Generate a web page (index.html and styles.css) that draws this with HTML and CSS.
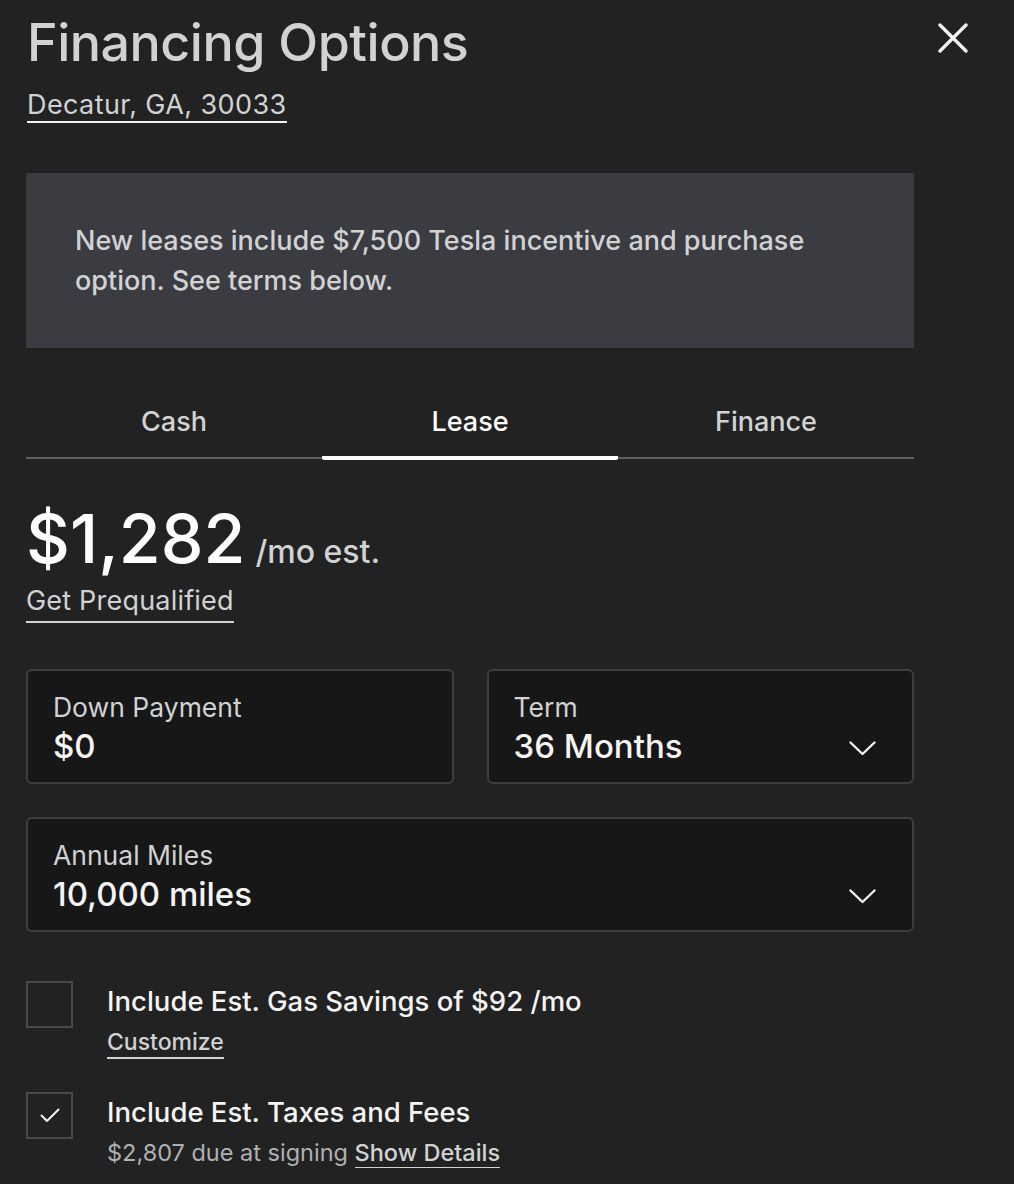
FILE: index.html
```html
<!DOCTYPE html>
<html lang="en">

<head>
    <meta charset="utf-8">
    <meta name="viewport" content="width=device-width, initial-scale=1.0">
    <title>Financing Options</title>
    <link rel="stylesheet" href="styles.css">
</head>

<body>

    <header class="top">
        <div>
            <h1>Financing Options</h1>
            <a class="zip" href="#">Decatur, GA, 30033</a>
        </div>
        <button class="luk" aria-label="Close">
            <svg width="30" height="30" viewBox="0 0 30 30">
                <path d="M2 2 L28 28 M28 2 L2 28" stroke="#f2f2f2" stroke-width="3.4" stroke-linecap="round" fill="none" />
            </svg>
        </button>
    </header>

    <main class="indhold">

        <div class="banner">
            New leases include $7,500 Tesla incentive and purchase option. See terms below.
        </div>

        <nav class="faner">
            <button class="fane">Cash</button>
            <button class="fane valgt">Lease</button>
            <button class="fane">Finance</button>
        </nav>

        <div class="pris">
            <span class="beloeb">$1,282</span>
            <span class="enhed">/mo est.</span>
        </div>
        <a class="link prequal" href="#">Get Prequalified</a>

        <section class="felter">
            <div class="felt">
                <span class="label">Down Payment</span>
                <span class="vaerdi">$0</span>
            </div>
            <div class="felt">
                <span class="label">Term</span>
                <span class="vaerdi">36 Months</span>
                <svg class="pil" width="27" height="15" viewBox="0 0 27 15">
                    <path d="M1.5 1.5 L13.5 13 L25.5 1.5" stroke="#f2f2f2" stroke-width="2.4" fill="none" stroke-linecap="round" stroke-linejoin="round" />
                </svg>
            </div>
            <div class="felt bred">
                <span class="label">Annual Miles</span>
                <span class="vaerdi">10,000 miles</span>
                <svg class="pil" width="27" height="15" viewBox="0 0 27 15">
                    <path d="M1.5 1.5 L13.5 13 L25.5 1.5" stroke="#f2f2f2" stroke-width="2.4" fill="none" stroke-linecap="round" stroke-linejoin="round" />
                </svg>
            </div>
        </section>

        <div class="valg">
            <span class="boks"></span>
            <div>
                <p class="valg-titel">Include Est. Gas Savings of $92 /mo</p>
                <a class="link lille" href="#">Customize</a>
            </div>
        </div>

        <div class="valg">
            <span class="boks">
                <svg width="20" height="15" viewBox="0 0 20 15">
                    <path d="M1.5 7.5 L7 13 L18.5 1.5" stroke="#f2f2f2" stroke-width="2" fill="none" stroke-linecap="round" stroke-linejoin="round" />
                </svg>
            </span>
            <div>
                <p class="valg-titel">Include Est. Taxes and Fees</p>
                <p class="note">$2,807 due at signing <a class="link" href="#">Show Details</a></p>
            </div>
        </div>

    </main>

</body>

</html>
```

FILE: styles.css
```css
body {
    margin: 0;
    background-color: #222222;
    color: #d1d2d4;
    font-family: Inter, "Noto Sans", sans-serif;
}

a {
    color: #d1d2d4;
    text-decoration: none;
}

p {
    margin: 0;
}

/* ---------- top ---------- */

.top {
    display: flex;
    justify-content: space-between;
    align-items: flex-start;
    padding: 11px 46px 0 27px;
}

h1 {
    margin: 0;
    font-size: 52px;
    font-weight: 500;
    letter-spacing: -0.5px;
    line-height: 64px;
}

.zip {
    display: inline-block;
    margin-top: 15px;
    font-size: 27px;
    letter-spacing: 0.4px;
    border-bottom: 2px solid #f2f2f2;
    line-height: 30px;
    padding-bottom: 1px;
}

.luk {
    background: none;
    border: none;
    padding: 0;
    margin-top: 12px;
    cursor: pointer;
}

/* ---------- indhold ---------- */

.indhold {
    width: 888px;
    padding-left: 26px;
}

.banner {
    margin-top: 50px;
    background-color: #3b3c41;
    padding: 48px 49px 47px 49px;
    font-size: 27px;
    font-weight: 500;
    line-height: 40px;
    color: #d1d2d4;
}

.faner {
    display: grid;
    grid-template-columns: 1fr 1fr 1fr;
    margin-top: 57px;
    border-bottom: 2px solid #5e5e5e;
}

.fane {
    background: none;
    border: none;
    font-family: inherit;
    font-size: 27px;
    font-weight: 500;
    line-height: 34px;
    color: #d1d2d4;
    padding: 0 0 17px 0;
    margin-bottom: -3px;
    border-bottom: 4px solid transparent;
}

.fane.valgt {
    color: #ffffff;
    border-bottom: 4px solid #ffffff;
    border-radius: 2px;
}

/* ---------- pris ---------- */

.pris {
    margin-top: 44px;
    display: flex;
    align-items: baseline;
    gap: 10px;
}

.beloeb {
    font-size: 68px;
    font-weight: 500;
    color: #ffffff;
    line-height: 70px;
}

.enhed {
    font-size: 32px;
    font-weight: 500;
    color: #d1d2d4;
}

.link {
    border-bottom: 2px solid #d1d2d4;
}

.prequal {
    display: inline-block;
    margin-top: 13px;
    font-size: 27px;
    letter-spacing: 0.2px;
    line-height: 30px;
    padding-bottom: 5px;
}

/* ---------- felter ---------- */

.felter {
    margin-top: 46px;
    display: grid;
    grid-template-columns: 1fr 1fr;
    gap: 33px;
}

.felt {
    position: relative;
    display: flex;
    flex-direction: column;
    box-sizing: border-box;
    height: 115px;
    background-color: #171717;
    border: 2px solid #3e3e3e;
    border-radius: 6px;
    padding: 21px 25px 0 25px;
}

.felt.bred {
    grid-column: span 2;
}

.label {
    font-size: 26.5px;
    line-height: 30px;
    color: #d1d2d4;
}

.vaerdi {
    margin-top: 4px;
    font-size: 33px;
    font-weight: 500;
    color: #f4f4f4;
    line-height: 40px;
}

.pil {
    position: absolute;
    right: 36px;
    top: 70px;
}

/* ---------- valg ---------- */

.valg {
    display: flex;
    gap: 34px;
    margin-top: 49px;
}

.valg + .valg {
    margin-top: 33px;
}

.boks {
    flex: none;
    box-sizing: border-box;
    width: 47px;
    height: 47px;
    border: 2px solid #48494d;
    display: flex;
    align-items: center;
    justify-content: center;
}

.valg-titel {
    font-size: 27.5px;
    font-weight: 500;
    color: #f4f4f4;
    line-height: 40px;
}

.lille {
    display: inline-block;
    margin-top: 6px;
    font-size: 23px;
    font-weight: 500;
    line-height: 30px;
}

.note {
    margin-top: 6px;
    font-size: 23.5px;
    color: #b0b1b3;
    line-height: 30px;
}

.note .link {
    font-weight: 500;
    color: #d1d2d4;
}
```
